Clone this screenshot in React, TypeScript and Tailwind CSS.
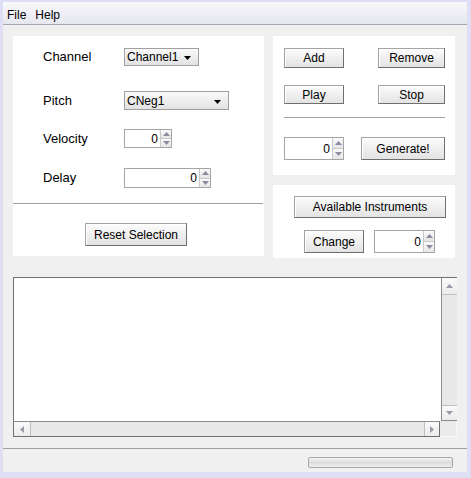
import React from "react";

const font = { fontFamily: '"Liberation Sans", Arial, sans-serif' };

function Btn({ className, label }: { className: string; label: string }) {
  return (
    <div
      className={`flex items-center justify-center border border-[#a3a3a3] border-b-[#6f6f6f] border-r-[#6f6f6f] bg-linear-to-b from-[#fcfcfc] to-[#e3e3e3] text-[12px] text-black shadow-[inset_1px_1px_0_#ffffff] ${className}`}
    >
      {label}
    </div>
  );
}

function Tri({ dir, color = "#7a7a7a" }: { dir: "up" | "down" | "left" | "right"; color?: string }) {
  const pts = {
    up: "0,4 3.5,0 7,4",
    down: "0,0 7,0 3.5,4",
    left: "4,0 4,7 0,3.5",
    right: "0,0 0,7 4,3.5",
  }[dir];
  const w = dir === "up" || dir === "down" ? 7 : 4;
  const h = dir === "up" || dir === "down" ? 4 : 7;
  return (
    <svg width={w} height={h} viewBox={`0 0 ${w} ${h}`}>
      <polygon points={pts} fill={color} />
    </svg>
  );
}

function Spinner({ className }: { className: string }) {
  return (
    <div className={`flex border border-[#a5a5a5] bg-white ${className}`}>
      <div className="flex flex-1 items-center justify-end pr-[2px] text-[12px] text-black">0</div>
      <div className="flex w-[11px] flex-col border-l border-[#c8c8c8]">
        <div className="flex flex-1 items-center justify-center border-b border-[#c8c8c8] bg-linear-to-b from-[#fafafa] to-[#e6e6e6]">
          <Tri dir="up" color="#8a8aa0" />
        </div>
        <div className="flex flex-1 items-center justify-center bg-linear-to-b from-[#fafafa] to-[#e6e6e6]">
          <Tri dir="down" color="#8a8aa0" />
        </div>
      </div>
    </div>
  );
}

function Combo({ className, label }: { className: string; label: string }) {
  return (
    <div
      className={`flex items-center justify-between border border-[#a0a0a0] bg-linear-to-b from-[#fafafa] to-[#e2e2e2] pl-[2px] pr-[7px] text-[12px] text-black ${className}`}
    >
      <span>{label}</span>
      <span className="mt-[2px]">
        <Tri dir="down" color="#000000" />
      </span>
    </div>
  );
}

export default function App() {
  return (
    <div
      style={font}
      className="flex h-[478px] w-[471px] flex-col overflow-hidden border-t-[2px] border-r-[4px] border-b-[6px] border-l-[3px] border-[#dedef4] bg-[#f0f0f0]"
    >
      {/* menu bar */}
      <div className="flex h-[23px] items-center gap-[9px] border-b border-[#a8a8b4] bg-linear-to-b from-[#f8f8fc] to-[#e6e6ee] pt-[4px] pl-[4px] text-[12px] text-black">
        <span>File</span>
        <span>Help</span>
      </div>

      <div className="flex flex-col pt-[11px] pl-[10px]">
        <div className="flex items-start gap-[9px]">
          {/* left panel */}
          <div className="flex h-[220px] w-[251px] flex-col bg-white pt-[12px] text-[13px] text-black">
            <div className="flex h-[18px] items-center pl-[30px]">
              <span className="w-[81px]">Channel</span>
              <Combo className="h-[18px] w-[75px]" label="Channel1" />
            </div>
            <div className="mt-[25px] flex h-[19px] items-center pl-[30px]">
              <span className="w-[81px]">Pitch</span>
              <Combo className="h-[19px] w-[105px]" label="CNeg1" />
            </div>
            <div className="mt-[19px] flex h-[19px] items-center pl-[30px]">
              <span className="w-[81px]">Velocity</span>
              <Spinner className="h-[19px] w-[48px]" />
            </div>
            <div className="mt-[20px] flex h-[20px] items-center pl-[30px]">
              <span className="w-[81px]">Delay</span>
              <Spinner className="h-[20px] w-[87px]" />
            </div>
            <div className="mt-[15px] h-px w-[250px] bg-[#a0a0a0]" />
            <div className="mt-[19px] flex pl-[72px]">
              <Btn className="h-[23px] w-[102px]" label="Reset Selection" />
            </div>
          </div>

          {/* right column */}
          <div className="flex w-[182px] flex-col gap-[10px]">
            <div className="flex h-[139px] flex-col bg-white pt-[12px] pl-[11px]">
              <div className="flex h-[20px] gap-[34px]">
                <Btn className="h-[20px] w-[60px]" label="Add" />
                <Btn className="h-[20px] w-[67px]" label="Remove" />
              </div>
              <div className="mt-[17px] flex h-[19px] gap-[34px]">
                <Btn className="h-[19px] w-[60px]" label="Play" />
                <Btn className="h-[19px] w-[67px]" label="Stop" />
              </div>
              <div className="mt-[13px] h-px w-[161px] bg-[#a0a0a0]" />
              <div className="mt-[19px] flex h-[23px] gap-[17px]">
                <Spinner className="h-[23px] w-[60px]" />
                <Btn className="h-[23px] w-[84px]" label="Generate!" />
              </div>
            </div>
            <div className="flex h-[73px] flex-col bg-white pt-[11px]">
              <div className="flex pl-[21px]">
                <Btn className="h-[22px] w-[152px]" label="Available Instruments" />
              </div>
              <div className="mt-[12px] flex h-[23px] gap-[10px] pl-[31px]">
                <Btn className="h-[23px] w-[60px]" label="Change" />
                <Spinner className="h-[23px] w-[61px]" />
              </div>
            </div>
          </div>
        </div>

        {/* text area */}
        <div className="mt-[19px] flex h-[160px] w-[444px] flex-col">
          <div className="flex h-[144px]">
            <div className="flex-1 border-t border-l border-[#707070] bg-white" />
            <div className="flex w-[16px] flex-col border-t border-b border-l border-[#8c8c8c] border-t-[#707070] bg-[#e8e8e8]">
              <div className="flex h-[17px] items-center justify-center border-b border-[#c0c0c0] bg-linear-to-b from-[#fafafa] to-[#ececec]">
                <Tri dir="up" color="#9a9aa6" />
              </div>
              <div className="flex-1" />
              <div className="flex h-[15px] items-center justify-center border-t border-[#c0c0c0] bg-linear-to-b from-[#fafafa] to-[#ececec]">
                <Tri dir="down" color="#9a9aa6" />
              </div>
            </div>
          </div>
          <div className="flex h-[16px]">
            <div className="flex flex-1 border-t border-r border-b border-l border-[#707070] border-t-[#8c8c8c] bg-[#e8e8e8]">
              <div className="flex w-[17px] items-center justify-center border-r border-[#c0c0c0] bg-linear-to-b from-[#fafafa] to-[#ececec]">
                <Tri dir="left" color="#9a9aa6" />
              </div>
              <div className="flex-1" />
              <div className="flex w-[15px] items-center justify-center border-l border-[#c0c0c0] bg-linear-to-b from-[#fafafa] to-[#ececec]">
                <Tri dir="right" color="#9a9aa6" />
              </div>
            </div>
            <div className="w-[17px] border-r border-b border-[#f8f8f8] bg-[#ebebeb]" />
          </div>
        </div>
      </div>

      {/* status bar */}
      <div className="mt-[11px] h-px w-full bg-[#a0a0a0]" />
      <div className="mt-[8px] flex justify-end pr-[14px]">
        <div className="h-[11px] w-[145px] rounded-[2px] border border-[#a8a8a8] bg-linear-to-b from-[#f4f4f4] via-[#dcdcdc] to-[#eeeeee]" />
      </div>
    </div>
  );
}
